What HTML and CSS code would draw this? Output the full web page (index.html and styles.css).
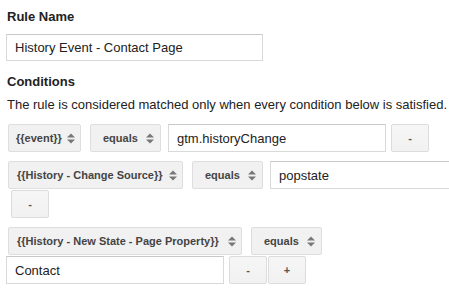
FILE: index.html
```html
<!DOCTYPE html>
<html>
<head>
<meta charset="utf-8">
<link rel="stylesheet" href="styles.css">
</head>
<body>
<div class="page">
  <div class="label">Rule Name</div>
  <input class="text-input name-input" type="text" value="History Event - Contact Page">
  <div class="label conditions-label">Conditions</div>
  <div class="desc">The rule is considered matched only when every condition below is satisfied.</div>

  <div class="cond">
    <div class="select sel-event"><span>{{event}}</span><svg class="arrow" width="8" height="11" viewBox="0 0 8 11"><path d="M0 4.5L4 0.5L8 4.5Z M0 6.5L4 10.5L8 6.5Z"/></svg></div>
    <div class="select sel-op"><span>equals</span><svg class="arrow" width="8" height="11" viewBox="0 0 8 11"><path d="M0 4.5L4 0.5L8 4.5Z M0 6.5L4 10.5L8 6.5Z"/></svg></div>
    <input class="text-input val-input" type="text" value="gtm.historyChange">
    <button class="btn">-</button>
  </div>

  <div class="cond">
    <div class="select sel-source"><span>{{History - Change Source}}</span><svg class="arrow" width="8" height="11" viewBox="0 0 8 11"><path d="M0 4.5L4 0.5L8 4.5Z M0 6.5L4 10.5L8 6.5Z"/></svg></div>
    <div class="select sel-op"><span>equals</span><svg class="arrow" width="8" height="11" viewBox="0 0 8 11"><path d="M0 4.5L4 0.5L8 4.5Z M0 6.5L4 10.5L8 6.5Z"/></svg></div>
    <input class="text-input val-input" type="text" value="popstate">
    <button class="btn">-</button>
  </div>

  <div class="cond">
    <div class="select sel-page"><span>{{History - New State - Page Property}}</span><svg class="arrow" width="8" height="11" viewBox="0 0 8 11"><path d="M0 4.5L4 0.5L8 4.5Z M0 6.5L4 10.5L8 6.5Z"/></svg></div>
    <div class="select sel-op"><span>equals</span><svg class="arrow" width="8" height="11" viewBox="0 0 8 11"><path d="M0 4.5L4 0.5L8 4.5Z M0 6.5L4 10.5L8 6.5Z"/></svg></div>
    <input class="text-input val-input" type="text" value="Contact">
    <button class="btn">-</button>
    <button class="btn">+</button>
  </div>
</div>
</body>
</html>
```

FILE: styles.css
```css
html, body {
  margin: 0;
  padding: 0;
  overflow: hidden;
  background: #fff;
}

.page {
  padding: 9px 0 0 6px;
  font-family: "Liberation Sans", Arial, sans-serif;
  font-size: 13px;
  color: #222;
}

.label {
  font-weight: bold;
  line-height: 16px;
  padding-left: 1px;
}

.conditions-label {
  margin-top: 13px;
}

.desc {
  margin-top: 7px;
  line-height: 16px;
  padding-left: 1px;
}

.text-input {
  display: block;
  box-sizing: border-box;
  height: 27px;
  margin: 0;
  padding: 0 8px;
  border: 1px solid #d9d9d9;
  border-top-color: #c8c8c8;
  background: #fff;
  font-family: "Liberation Sans", Arial, sans-serif;
  font-size: 13px;
  color: #222;
  outline: none;
}

.name-input {
  width: 257px;
  margin-top: 9px;
}

.cond {
  display: flex;
  flex-wrap: wrap;
  align-items: flex-start;
  row-gap: 1px;
  width: 510px;
  margin-bottom: 9px;
}

.desc + .cond {
  margin-top: 11px;
}

.select {
  box-sizing: border-box;
  height: 28px;
  margin-left: 2px;
  margin-right: 7px;
  display: flex;
  align-items: center;
  justify-content: space-between;
  padding: 0 5px 0 7px;
  background: #f1f1f1;
  border: 1px solid #dedede;
  border-radius: 2px;
  font-size: 11px;
  font-weight: bold;
  color: #444;
}

.arrow {
  fill: #777;
  flex: none;
}

.sel-event { width: 73px; }
.sel-source { width: 175px; padding-left: 8px; }
.sel-page { width: 234px; padding-left: 8px; }
.sel-op { width: 71px; padding-left: 12px; padding-right: 6px; }

.val-input {
  width: 218px;
  height: 28px;
}

.btn {
  box-sizing: border-box;
  width: 38px;
  height: 28px;
  margin: 0 0 0 5px;
  padding: 0;
  background: linear-gradient(#f6f6f6, #f1f1f1);
  border: 1px solid #dcdcdc;
  border-radius: 2px;
  font-family: "Liberation Sans", Arial, sans-serif;
  font-size: 11px;
  font-weight: bold;
  color: #555;
}

.btn + .btn {
  margin-left: 1px;
}
```
